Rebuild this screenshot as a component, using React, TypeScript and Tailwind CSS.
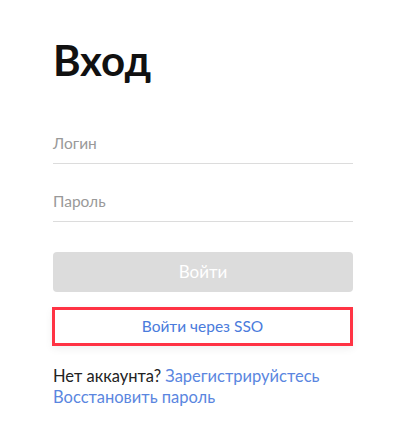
export default function App() {
  return (
    <div className="min-h-screen bg-white font-['Lato',sans-serif]">
      <div className="w-[300px] ml-[53px] pt-[34px]">
        <h1 className="text-[42px] leading-[52px] font-bold text-[#111]">Вход</h1>

        <div className="mt-[28px] flex flex-col">
          <div className="h-[50px] border-b border-[#dcdcdc] flex items-end pb-[8px]">
            <span className="text-[15.5px] text-[#999]">Логин</span>
          </div>
          <div className="h-[58px] border-b border-[#dcdcdc] flex items-end pb-[8px]">
            <span className="text-[15.5px] text-[#999]">Пароль</span>
          </div>
        </div>

        <button className="mt-[30px] w-full h-[40px] rounded-[4px] bg-[#dcdcdc] text-white text-[17px]">
          Войти
        </button>

        <button className="mt-[15px] -ml-px w-[301px] h-[39px] border-[3px] border-[#ff3344] bg-white text-[#4a7bdc] text-[15.5px] shadow-[0_3px_8px_rgba(0,0,0,0.06)]">
          Войти через SSO
        </button>

        <div className="mt-[20px] text-[16.5px] leading-[21px]">
          <div className="text-[#222]">
            Нет аккаунта? <span className="text-[#5a86e0]">Зарегистрируйстесь</span>
          </div>
          <div className="text-[#5a86e0]">Восстановить пароль</div>
        </div>
      </div>
    </div>
  );
}
